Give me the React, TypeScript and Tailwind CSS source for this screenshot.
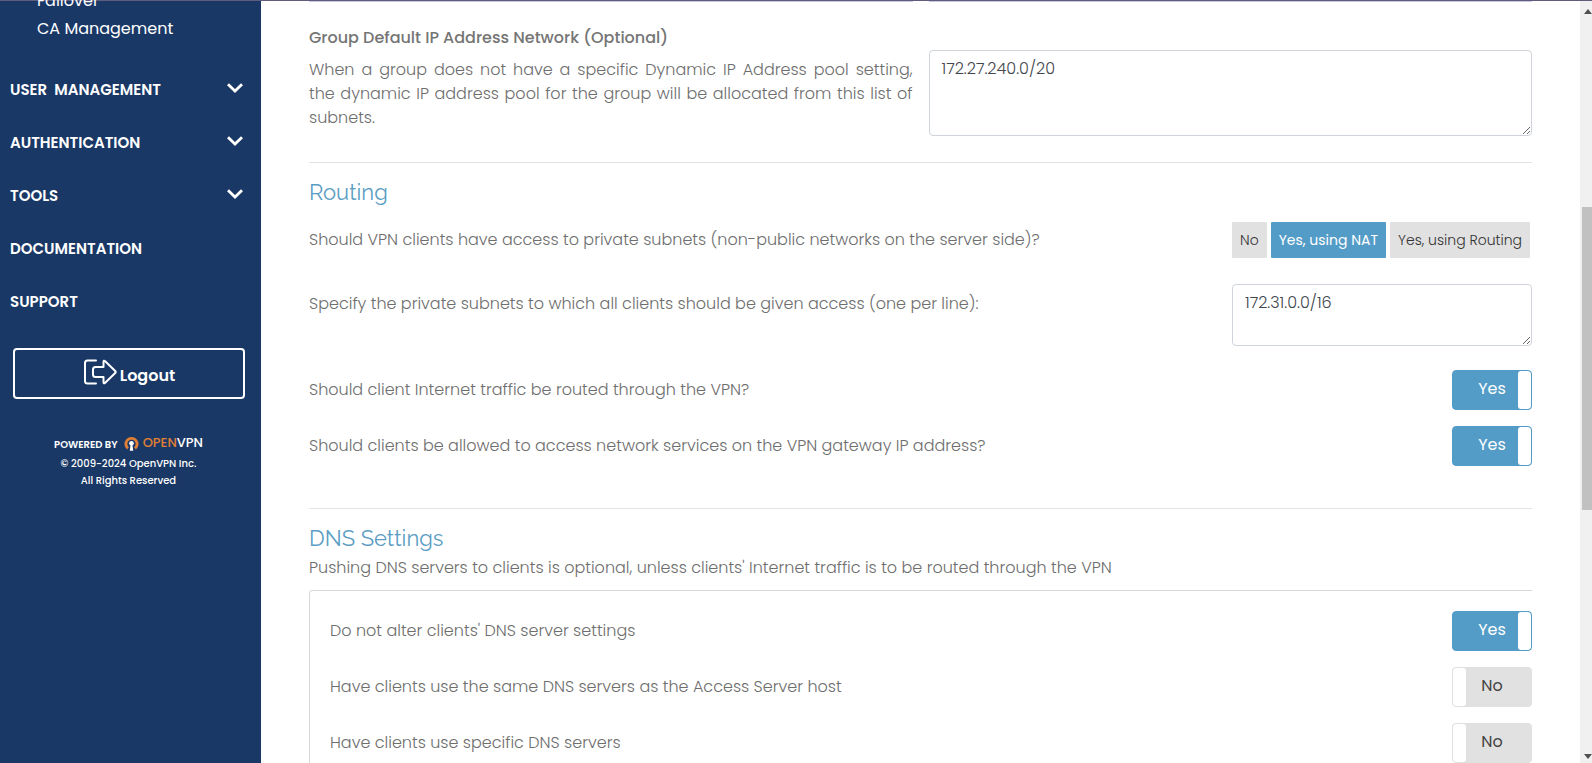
import { useState } from "react";

const navItems = [
  { label: "USER  MANAGEMENT", expandable: true },
  { label: "AUTHENTICATION", expandable: true },
  { label: "TOOLS", expandable: true },
  { label: "DOCUMENTATION", expandable: false },
  { label: "SUPPORT", expandable: false },
];

const groupNetworkHelp =
  "When a group does not have a specific Dynamic IP Address pool setting, the\u00a0dynamic IP address pool for the group will be allocated from this list of subnets.";

function Chevron() {
  return (
    <svg width="16" height="10" viewBox="0 0 16 10" fill="none" stroke="white" strokeWidth="2.800" className="mb-1" aria-hidden="true">
      <path d="M1 1.200 8 8l7-6.800" />
    </svg>
  );
}

function LogoutIcon() {
  return (
    <svg width="34" height="26" viewBox="0 0 34 26" fill="none" stroke="white" strokeWidth="2" strokeLinejoin="round" strokeLinecap="round" aria-hidden="true">
      <path d="M13 1.500H4.500Q2 1.500 2 4v18q0 2.500 2.500 2.500H13" />
      <path d="M12.500 8h8V3q0-2.200 1.700-.7l10 9.700q1 1 0 2l-10 9.700q-1.700 1.500-1.700-.7V18h-8Q10 18 10 15.500v-5Q10 8 12.500 8z" />
    </svg>
  );
}

function OpenVpnMark() {
  return (
    <svg width="15" height="15" viewBox="0 0 15 15" aria-hidden="true">
      <path d="M4 12.300A5.600 5.600 0 1 1 11 12.300" fill="none" stroke="#e07f35" strokeWidth="2.900" />
      <circle cx="7.500" cy="7.300" r="2.300" fill="white" />
      <path d="M6.600 8.500h1.800l.8 6.300H5.800z" fill="white" />
    </svg>
  );
}

function Sidebar() {
  return (
    <aside className="flex w-[261px] shrink-0 flex-col bg-[#1a3866] text-white">
      <div className="-mt-3.5 flex flex-col pl-[37px] text-base leading-7">
        <a href="#failover">Failover</a>
        <a href="#ca-management">CA Management</a>
      </div>
      <nav className="mt-5 flex flex-col">
        {navItems.map((item) => (
          <a
            key={item.label}
            href="#nav"
            className="flex h-[53px] items-center justify-between pr-[18px] pl-2.5 text-[15px] font-semibold whitespace-pre"
          >
            {item.label}
            {item.expandable && <Chevron />}
          </a>
        ))}
      </nav>
      <button
        type="button"
        className="mx-[13px] mt-5 mr-4 flex h-[51px] items-center justify-center gap-[3px] rounded-[4px] border-2 border-white pb-1 text-base font-semibold"
      >
        <LogoutIcon />
        <span className="pt-2">Logout</span>
      </button>
      <footer className="mt-[34px] flex flex-col items-center pr-1 text-[10px] leading-[17px] font-medium">
        <div className="mb-0.5 flex items-center gap-1.5 whitespace-nowrap">
          <span className="pt-0.5 font-semibold">POWERED BY</span>
          <a href="#openvpn" className="flex items-center gap-1 text-[13px] leading-5 font-medium">
            <OpenVpnMark />
            <span>
              <span className="text-[#e07f35]">OPEN</span>VPN
            </span>
          </a>
        </div>
        <p>© 2009-2024 OpenVPN Inc.</p>
        <p>All Rights Reserved</p>
      </footer>
    </aside>
  );
}

function ToggleRow({ id, label, initial }: { id: string; label: string; initial: boolean }) {
  const [on, setOn] = useState(initial);
  return (
    <div className="flex items-center justify-between">
      <label htmlFor={id}>{label}</label>
      <div
        className={`relative flex h-10 w-20 overflow-hidden rounded-[4px] border ${
          on ? "justify-end border-[#539cc7] bg-[#539cc7] text-white" : "justify-start border-[#e1e1e1] bg-[#e1e1e1] text-[#444444]"
        }`}
      >
        <span className="pointer-events-none absolute inset-x-0 top-1.5 text-center font-normal">{on ? "Yes" : "No"}</span>
        <span className="h-full w-[13px] rounded-[3px] bg-white" />
        <input
          id={id}
          type="checkbox"
          role="switch"
          checked={on}
          onChange={() => setOn(!on)}
          className="absolute inset-0 cursor-pointer opacity-0"
        />
      </div>
    </div>
  );
}

const accessOptions = ["No", "Yes, using NAT", "Yes, using Routing"];

function AccessChoice() {
  const [selected, setSelected] = useState("Yes, using NAT");
  return (
    <div role="group" aria-labelledby="access-label" className="flex gap-1 pr-0.5">
      {accessOptions.map((option) => (
        <button
          key={option}
          type="button"
          aria-pressed={option === selected}
          onClick={() => setSelected(option)}
          className={`h-9 rounded-[1px] px-2 text-sm ${
            option === selected ? "bg-[#539cc7] font-normal text-white" : "bg-[#e1e1e1] text-[#333333]"
          }`}
        >
          {option}
        </button>
      ))}
    </div>
  );
}

function ScrollTrack() {
  return (
    <div aria-hidden="true" className="flex w-3 shrink-0 flex-col items-end overflow-hidden bg-[#f0f0f0]">
      <div className="flex h-[206px] flex-col pt-2">
        <svg width="8" height="5" viewBox="0 0 8 5">
          <path d="M0 5 4 0l4 5z" fill="#505050" />
        </svg>
      </div>
      <div className="h-[303px] w-2.5 bg-[#c1c1c1]" />
      <svg width="8" height="5" viewBox="0 0 8 5" className="mt-auto mb-1">
        <path d="M0 0h8L4 5z" fill="#505050" />
      </svg>
    </div>
  );
}

export default function App() {
  return (
    <div className="flex h-screen flex-col overflow-hidden bg-white font-['Poppins','Inter',sans-serif] text-base leading-6">
      <div className="h-px shrink-0 bg-[#605c80]" />
      <div className="flex min-h-0 flex-1">
        <Sidebar />
        <main className="min-w-0 flex-1 overflow-hidden px-12 font-light text-[#6e6e6e]">
          <div className="grid grid-cols-2 gap-4">
            <div className="h-px bg-[#c8c8e0]" />
            <div className="h-px bg-[#c8c8e0]" />
          </div>
          <section className="grid grid-cols-2 gap-4 pt-6">
            <div>
              <label htmlFor="group-network" className="font-medium text-[#757575]">
                Group Default IP Address Network (Optional)
              </label>
              <p className="mt-2 text-justify">{groupNetworkHelp}</p>
            </div>
            <textarea
              id="group-network"
              defaultValue="172.27.240.0/20"
              className="mt-6 h-[86px] resize rounded-[4px] border border-[#ced4da] px-3 py-1.5 text-[#3f464d]"
            />
          </section>

          <section className="mt-[26px] border-t border-[#e0e2e4] pt-[15px]">
            <h2 className="font-['Raleway','Lato',sans-serif] text-[22px] leading-7 font-normal text-[#5b9dc3]">Routing</h2>
            <div className="mt-4 flex items-center justify-between">
              <span id="access-label">
                Should VPN clients have access to private subnets (non-public networks on the server side)?
              </span>
              <AccessChoice />
            </div>
            <div className="mt-[26px] flex items-start justify-between">
              <label htmlFor="private-subnets" className="pt-2">
                Specify the private subnets to which all clients should be given access (one per line):
              </label>
              <textarea
                id="private-subnets"
                defaultValue="172.31.0.0/16"
                className="h-[62px] w-[300px] resize rounded-[4px] border border-[#ced4da] px-3 py-1.5 text-[#3f464d]"
              />
            </div>
            <div className="mt-6 flex flex-col gap-4">
              <ToggleRow id="route-internet" label="Should client Internet traffic be routed through the VPN?" initial={true} />
              <ToggleRow
                id="gateway-access"
                label="Should clients be allowed to access network services on the VPN gateway IP address?"
                initial={true}
              />
            </div>
          </section>

          <section className="mt-[42px] border-t border-[#e0e2e4] pt-[15px]">
            <h2 className="font-['Raleway','Lato',sans-serif] text-[22px] leading-7 font-normal text-[#5b9dc3]">DNS Settings</h2>
            <p className="mt-1">
              Pushing DNS servers to clients is optional, unless clients' Internet traffic is to be routed through the VPN
            </p>
            <div className="mt-2.5 flex flex-col gap-4 rounded-tl-[4px] border-t border-l border-[#d8d8da] pt-5 pl-5">
              <ToggleRow id="dns-keep" label="Do not alter clients' DNS server settings" initial={true} />
              <ToggleRow id="dns-same" label="Have clients use the same DNS servers as the Access Server host" initial={false} />
              <ToggleRow id="dns-specific" label="Have clients use specific DNS servers" initial={false} />
            </div>
          </section>
        </main>
        <ScrollTrack />
      </div>
    </div>
  );
}
